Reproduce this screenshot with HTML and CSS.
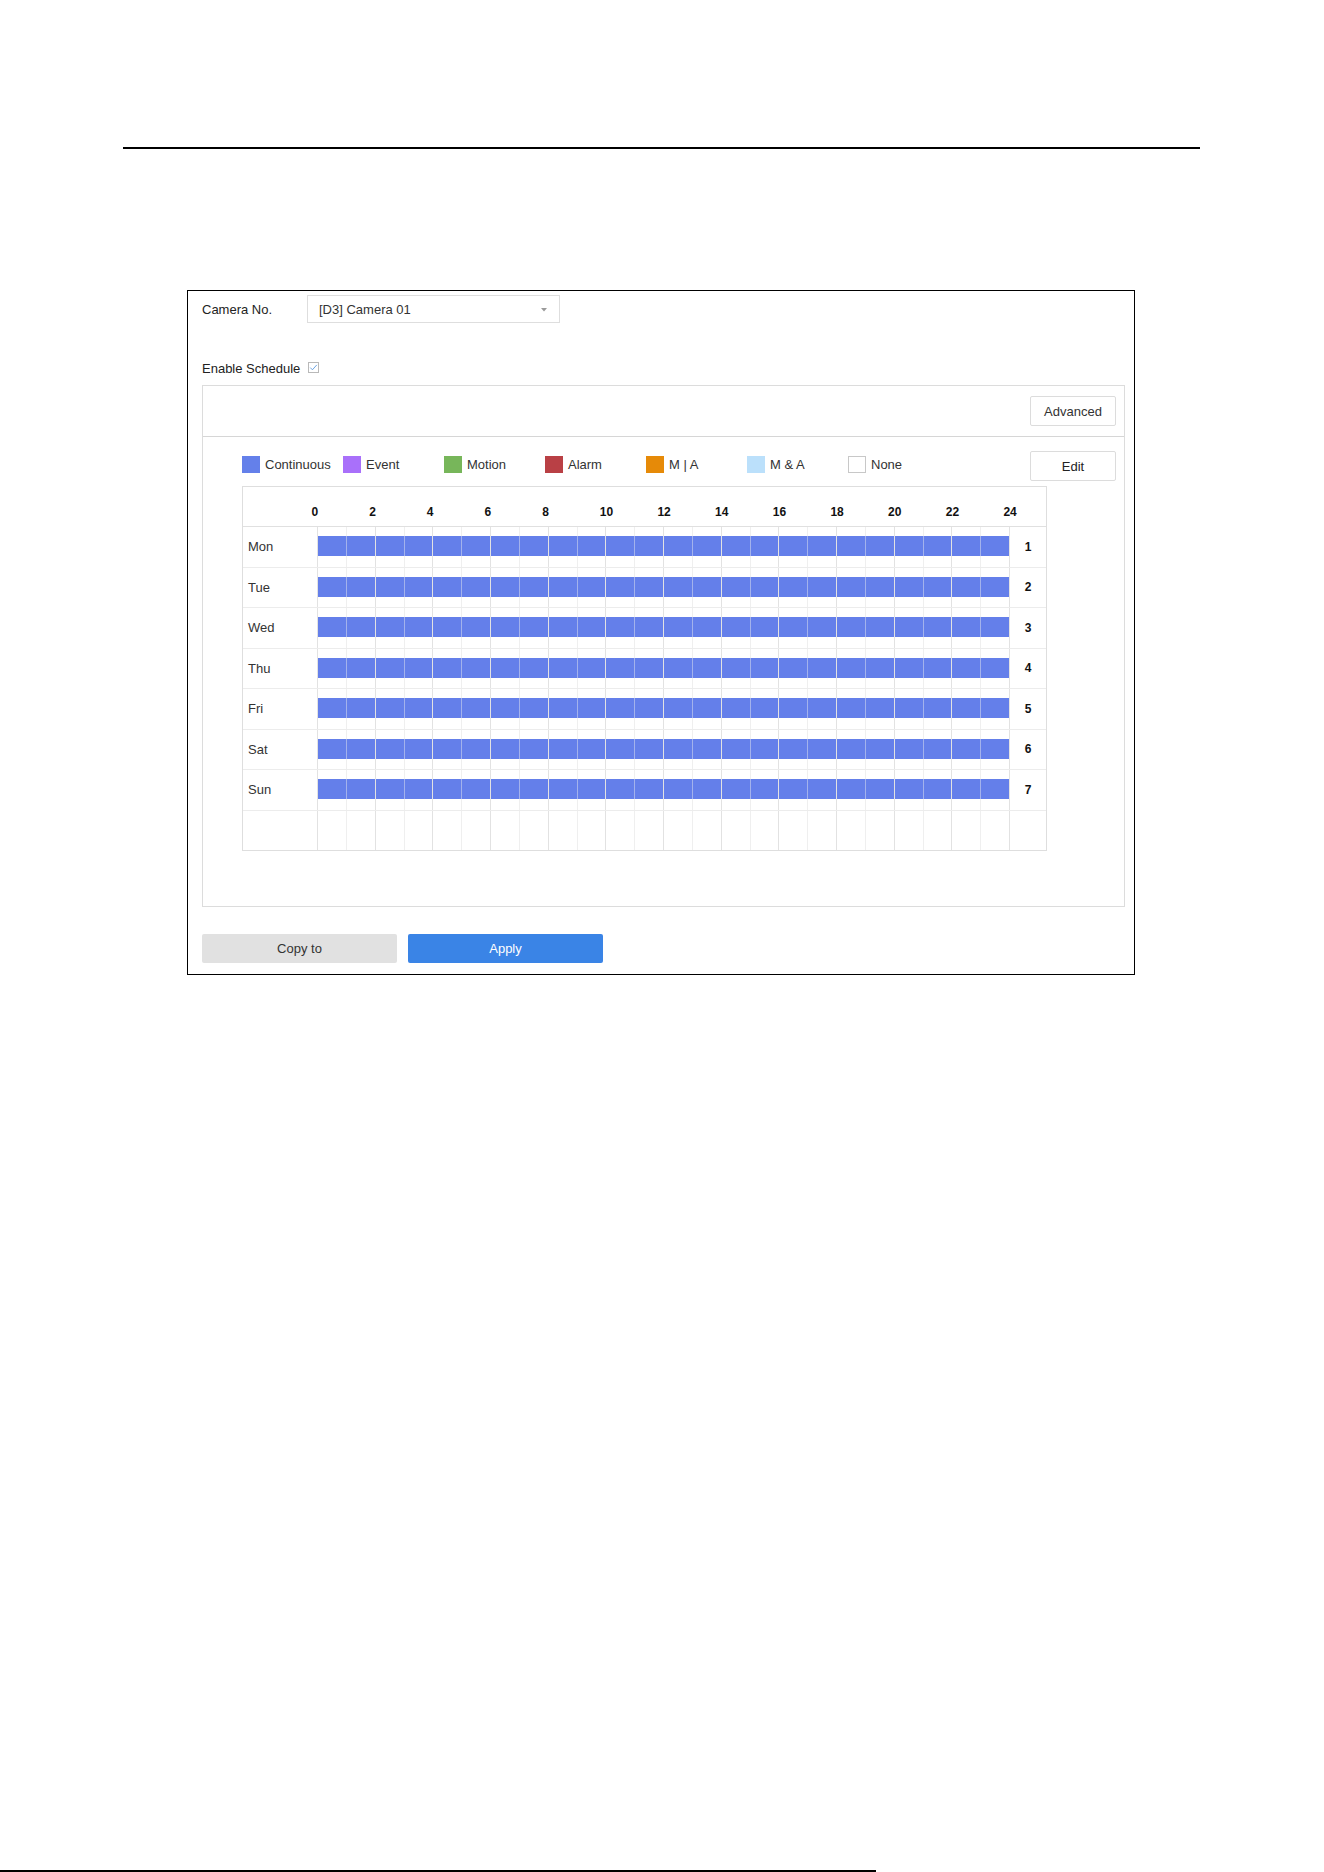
FILE: index.html
```html
<!DOCTYPE html>
<html lang="en">
<head>
<meta charset="utf-8">
<title>Record Schedule</title>
<link rel="stylesheet" href="styles.css">
</head>
<body>
<div class="page">
  <div class="rule-top"></div>

  <div class="dialog">
    <div class="cam-row">
      <span class="field-label">Camera No.</span>
      <div class="select">
        <span>[D3] Camera 01</span>
        <svg class="caret" width="6" height="4" viewBox="0 0 6 4"><path d="M0 0H6L3 3.5Z" fill="#9a9a9a"/></svg>
      </div>
    </div>

    <div class="sched-row">
      <span class="field-label sched-label">Enable Schedule</span>
      <svg class="checkbox" width="11" height="11" viewBox="0 0 11 11">
        <rect x="0.5" y="0.5" width="10" height="10" fill="#fff" stroke="#b9b9b9"/>
        <path d="M2.3 5.6L4.4 7.8L8.8 2.9" fill="none" stroke="#5d9be0" stroke-width="0.9"/>
      </svg>
    </div>

    <div class="panel">
      <div class="panel-head">
        <button class="btn">Advanced</button>
      </div>
      <div class="panel-body">
        <div class="legend-row">
          <div class="legend">
            <div class="legend-item"><span class="swatch sw-cont"></span>Continuous</div>
            <div class="legend-item"><span class="swatch sw-event"></span>Event</div>
            <div class="legend-item"><span class="swatch sw-motion"></span>Motion</div>
            <div class="legend-item"><span class="swatch sw-alarm"></span>Alarm</div>
            <div class="legend-item"><span class="swatch sw-mora"></span>M | A</div>
            <div class="legend-item"><span class="swatch sw-manda"></span>M &amp; A</div>
            <div class="legend-item"><span class="swatch sw-none"></span>None</div>
          </div>
          <button class="btn btn-edit">Edit</button>
        </div>

        <div class="schedule" id="schedule">
          <div class="thead">
            <span class="hour">0</span><span class="hour">2</span><span class="hour">4</span><span class="hour">6</span><span class="hour">8</span><span class="hour">10</span><span class="hour">12</span><span class="hour">14</span><span class="hour">16</span><span class="hour">18</span><span class="hour">20</span><span class="hour">22</span><span class="hour">24</span>
          </div>
        </div>
      </div>
    </div>

    <div class="actions">
      <button class="btn-wide btn-copy">Copy to</button>
      <button class="btn-wide btn-apply">Apply</button>
    </div>
  </div>

  <div class="rule-bottom"></div>
</div>
<script src="app.js"></script>
</body>
</html>
```

FILE: app.js
```js
// Build the weekly timeline rows: each day is recorded continuously 0-24h.
(function () {
  var days = ["Mon", "Tue", "Wed", "Thu", "Fri", "Sat", "Sun", ""];
  var table = document.getElementById("schedule");
  days.forEach(function (day, idx) {
    var row = document.createElement("div");
    row.className = "row";
    var label = document.createElement("div");
    label.className = "day";
    label.textContent = day;
    row.appendChild(label);
    for (var h = 0; h < 24; h++) {
      var slot = document.createElement("div");
      slot.className = "slot";
      if (day) {
        var bar = document.createElement("div");
        bar.className = "bar";
        slot.appendChild(bar);
      }
      row.appendChild(slot);
    }
    var num = document.createElement("div");
    num.className = "num";
    num.textContent = day ? String(idx + 1) : "";
    row.appendChild(num);
    table.appendChild(row);
  });
})();
```

FILE: styles.css
```css
* {
  box-sizing: border-box;
}

html, body {
  margin: 0;
  padding: 0;
  background: #fff;
}

body {
  font-family: "Liberation Sans", Arial, sans-serif;
  font-size: 13px;
  color: #333;
}

.page {
  width: 1324px;
  height: 1872px;
  display: flex;
  flex-direction: column;
  overflow: hidden;
}

.rule-top {
  margin: 147px 0 0 123px;
  width: 1077px;
  height: 2px;
  background: #000;
  flex: none;
}

.rule-bottom {
  margin-top: auto;
  width: 876px;
  height: 2px;
  background: #000;
  flex: none;
}

/* Dialog frame */
.dialog {
  margin: 141px 0 0 187px;
  width: 948px;
  border: 1px solid #000;
  padding: 4px 9px 11px 14px;
  display: flex;
  flex-direction: column;
  flex: none;
}

.cam-row {
  display: flex;
  align-items: center;
  height: 28px;
}

.field-label {
  width: 105px;
  flex: none;
  color: #222;
}

.select {
  width: 253px;
  height: 28px;
  border: 1px solid #dedede;
  padding: 1px 11px 0 11px;
  display: flex;
  align-items: center;
  justify-content: space-between;
  color: #333;
}

.caret {
  margin-top: 1px;
  margin-right: 1px;
}

.sched-row {
  margin-top: 34px;
  height: 22px;
  display: flex;
  align-items: center;
}

.sched-label {
  width: 106px;
}

.checkbox {
  display: block;
  margin-top: -1px;
}

/* Schedule panel */
.panel {
  margin-top: 6px;
  height: 522px;
  border: 1px solid #dcdcdc;
  display: flex;
  flex-direction: column;
}

.panel-head {
  height: 51px;
  border-bottom: 1px solid #d6d6d6;
  display: flex;
  align-items: center;
  justify-content: flex-end;
  padding-right: 8px;
  flex: none;
}

.btn {
  width: 86px;
  height: 30px;
  background: #fff;
  border: 1px solid #dcdcdc;
  border-radius: 2px;
  font-family: inherit;
  font-size: 13px;
  color: #333;
  padding: 0;
}

.panel-body {
  padding: 14px 8px 0 39px;
}

.legend-row {
  display: flex;
  align-items: flex-start;
  height: 30px;
}

.legend {
  display: flex;
  padding-top: 5px;
}

.legend-item {
  width: 101px;
  display: flex;
  align-items: center;
  gap: 5px;
  color: #333;
}

.swatch {
  width: 18px;
  height: 17px;
  flex: none;
}

.sw-cont { background: #6480ea; }
.sw-event { background: #a970fa; }
.sw-motion { background: #77b65a; }
.sw-alarm { background: #b94045; }
.sw-mora { background: #e68a08; }
.sw-manda { background: #bbe0fb; }
.sw-none { background: #fff; border: 1px solid #c8c8c8; }

.btn-edit {
  margin-left: auto;
  color: #222;
}

/* Weekly timeline */
.schedule {
  margin-top: 5px;
  width: 805px;
  height: 365px;
  border: 1px solid #dedede;
  display: flex;
  flex-direction: column;
}

.thead {
  height: 40px;
  flex: none;
  border-bottom: 1px solid #e0e0e0;
  display: flex;
  align-items: flex-start;
  padding: 18px 0 0 68.5px;
}

.hour {
  flex: 0 0 57.667px;
  font-size: 12px;
  line-height: 14px;
  font-weight: bold;
  color: #111;
}

.row {
  flex: 1;
  display: grid;
  grid-template-columns: 74px repeat(24, 1fr) 37px;
  border-bottom: 1px solid #ececec;
}

.row:last-child {
  border-bottom: none;
}

.day {
  display: flex;
  align-items: center;
  padding-left: 5px;
  color: #333;
}

.slot {
  border-left: 1px solid #efefef;
  padding-top: 9px;
}

.slot:nth-child(even) {
  border-left-color: #e2e2e2;
}

.bar {
  height: 20px;
  background: #647fea;
}

.slot:nth-child(odd) .bar {
  box-shadow: -1px 0 0 rgba(100, 127, 234, 0.55);
}

.num {
  border-left: 1px solid #e2e2e2;
  display: flex;
  align-items: center;
  justify-content: center;
  font-size: 12px;
  font-weight: bold;
  color: #111;
}

/* Footer actions */
.actions {
  margin-top: 27px;
  display: flex;
  gap: 11px;
}

.btn-wide {
  width: 195px;
  height: 29px;
  border: none;
  border-radius: 2px;
  font-family: inherit;
  font-size: 13px;
  padding: 0;
}

.btn-copy {
  background: #e1e1e1;
  color: #333;
}

.btn-apply {
  background: #3a84e6;
  color: #fff;
}
```
